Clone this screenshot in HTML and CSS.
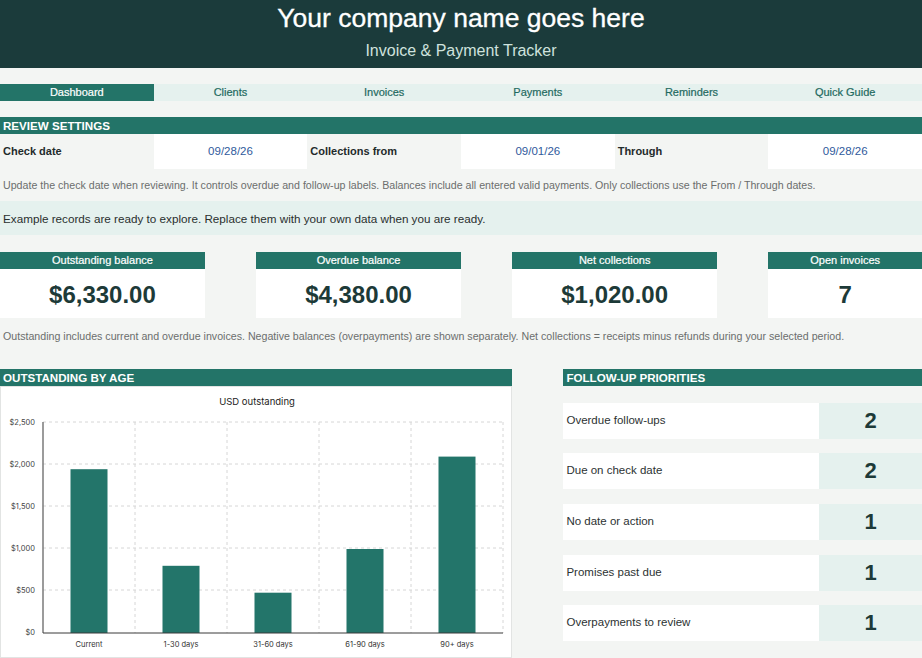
FILE: index.html
```html
<!DOCTYPE html>
<html lang="en">
<head>
<meta charset="utf-8">
<title>Invoice &amp; Payment Tracker</title>
<link rel="stylesheet" href="styles.css">
</head>
<body>
<header class="masthead">
  <h1 class="company">Your company name goes here</h1>
  <p class="subtitle">Invoice &amp; Payment Tracker</p>
</header>

<nav class="tabs">
  <a class="tab is-active">Dashboard</a>
  <a class="tab">Clients</a>
  <a class="tab">Invoices</a>
  <a class="tab">Payments</a>
  <a class="tab">Reminders</a>
  <a class="tab">Quick Guide</a>
</nav>

<section class="review">
  <h2 class="bar">REVIEW SETTINGS</h2>
  <div class="settings">
    <div class="set-label">Check date</div>
    <div class="set-value">09/28/26</div>
    <div class="set-label">Collections from</div>
    <div class="set-value">09/01/26</div>
    <div class="set-label">Through</div>
    <div class="set-value">09/28/26</div>
  </div>
  <p class="note">Update the check date when reviewing. It controls overdue and follow-up labels. Balances include all entered valid payments. Only collections use the From / Through dates.</p>
  <p class="banner">Example records are ready to explore. Replace them with your own data when you are ready.</p>
</section>

<section class="kpis">
  <div class="kpi kpi-1">
    <div class="kpi-head">Outstanding balance</div>
    <div class="kpi-value">$6,330.00</div>
  </div>
  <div class="kpi kpi-2">
    <div class="kpi-head">Overdue balance</div>
    <div class="kpi-value">$4,380.00</div>
  </div>
  <div class="kpi kpi-3">
    <div class="kpi-head">Net collections</div>
    <div class="kpi-value">$1,020.00</div>
  </div>
  <div class="kpi kpi-4">
    <div class="kpi-head">Open invoices</div>
    <div class="kpi-value">7</div>
  </div>
</section>
<p class="note note-kpi">Outstanding includes current and overdue invoices. Negative balances (overpayments) are shown separately. Net collections = receipts minus refunds during your selected period.</p>

<section class="lower">
  <div class="age">
    <h2 class="bar">OUTSTANDING BY AGE</h2>
    <div class="chart-box">
      <svg class="chart" width="510" height="270" viewBox="0 0 510 270">
        <text class="chart-title" x="256" y="18" text-anchor="middle">USD outstanding</text>
        <!-- dashed grid -->
        <g class="grid">
          <line x1="42" y1="35" x2="502" y2="35"/>
          <line x1="42" y1="77" x2="502" y2="77"/>
          <line x1="42" y1="119" x2="502" y2="119"/>
          <line x1="42" y1="161" x2="502" y2="161"/>
          <line x1="42" y1="203" x2="502" y2="203"/>
          <line x1="134" y1="35" x2="134" y2="246"/>
          <line x1="226" y1="35" x2="226" y2="246"/>
          <line x1="318" y1="35" x2="318" y2="246"/>
          <line x1="410" y1="35" x2="410" y2="246"/>
          <line x1="502" y1="35" x2="502" y2="246"/>
        </g>
        <g class="ylabels" text-anchor="end">
          <text x="34" y="38">$2,500</text>
          <text x="34" y="80">$2,000</text>
          <text x="34" y="122">$1,500</text>
          <text x="34" y="164">$1,000</text>
          <text x="34" y="206">$500</text>
          <text x="34" y="248">$0</text>
        </g>
        <g class="bars">
          <rect x="69.5" y="82.2" width="37" height="163.8"/>
          <rect x="161.5" y="178.8" width="37" height="67.2"/>
          <rect x="253.5" y="205.7" width="37" height="40.3"/>
          <rect x="345.5" y="162" width="37" height="84"/>
          <rect x="437.5" y="69.6" width="37" height="176.4"/>
        </g>
        <line class="axis-y" x1="42" y1="35" x2="42" y2="246"/>
        <line class="axis-x" x1="42" y1="246" x2="502" y2="246"/>
        <g class="xlabels" text-anchor="middle">
          <text x="88" y="260">Current</text>
          <text x="180" y="260">1-30 days</text>
          <text x="272" y="260">31-60 days</text>
          <text x="364" y="260">61-90 days</text>
          <text x="456" y="260">90+ days</text>
        </g>
      </svg>
    </div>
  </div>

  <div class="priorities">
    <h2 class="bar">FOLLOW-UP PRIORITIES</h2>
    <ul class="prio-list">
      <li class="prio"><span class="prio-label">Overdue follow-ups</span><span class="prio-count">2</span></li>
      <li class="prio"><span class="prio-label">Due on check date</span><span class="prio-count">2</span></li>
      <li class="prio"><span class="prio-label">No date or action</span><span class="prio-count">1</span></li>
      <li class="prio"><span class="prio-label">Promises past due</span><span class="prio-count">1</span></li>
      <li class="prio"><span class="prio-label">Overpayments to review</span><span class="prio-count">1</span></li>
    </ul>
  </div>
</section>
</body>
</html>
```

FILE: styles.css
```css
:root {
  --ink: #1d3a38;
  --deep: #1b3b3b;
  --teal: #237468;
  --tint: #e5f1ee;
  --page: #f3f5f3;
  --muted: #6b6e6d;
  --date: #2f5a9c;
}

* { box-sizing: border-box; }

body {
  margin: 0;
  background: var(--page);
  font-family: "Liberation Sans", Arial, sans-serif;
  color: #2b3333;
  width: 922px;
  overflow: hidden;
}

/* Top banner */
.masthead {
  background: var(--deep);
  height: 68px;
  padding-top: 3px;
  text-align: center;
}
.company {
  margin: 0;
  font-size: 26.5px;
  line-height: 30px;
  font-weight: normal;
  color: #ffffff;
  -webkit-text-stroke: 0.3px #ffffff;
}
.subtitle {
  margin: 8px 0 0;
  font-size: 16px;
  line-height: 20px;
  color: #cfe2de;
}

/* Sheet navigation */
.tabs {
  margin-top: 16px;
  display: grid;
  grid-template-columns: repeat(6, 1fr);
  height: 17px;
}
.tab {
  background: var(--tint);
  color: #1f6a5f;
  font-size: 11px;
  line-height: 17px;
  text-align: center;
  -webkit-text-stroke: 0.2px currentColor;
}
.tab.is-active {
  background: var(--teal);
  color: #ffffff;
}

/* Section title bars */
.bar {
  margin: 0;
  height: 17px;
  background: var(--teal);
  color: #ffffff;
  font-size: 11.6px;
  line-height: 17px;
  font-weight: bold;
  padding-left: 3px;
}

.review { margin-top: 16px; }

.settings {
  display: grid;
  grid-template-columns: repeat(6, 1fr);
  height: 34px;
}
.set-label {
  font-size: 11px;
  font-weight: bold;
  color: #1f2b2b;
  padding-left: 3px;
  line-height: 35px;
}
.set-value {
  background: #ffffff;
  color: var(--date);
  font-size: 11.5px;
  text-align: center;
  line-height: 35px;
}

.note {
  margin: 0;
  height: 33px;
  padding-left: 3px;
  font-size: 10.65px;
  line-height: 34px;
  color: var(--muted);
  white-space: nowrap;
}
.banner {
  margin: 0;
  height: 34px;
  background: var(--tint);
  padding-left: 3px;
  font-size: 11.7px;
  line-height: 35px;
  color: #2a2f2f;
}

/* Headline figures */
.kpis {
  margin-top: 17px;
  display: grid;
  grid-template-columns: repeat(18, 1fr);
}
.kpi-1 { grid-column: 1 / 5; }
.kpi-2 { grid-column: 6 / 10; }
.kpi-3 { grid-column: 11 / 15; }
.kpi-4 { grid-column: 16 / 19; }
.kpi-head {
  height: 17px;
  background: var(--teal);
  color: #ffffff;
  font-size: 11px;
  line-height: 17px;
  text-align: center;
  -webkit-text-stroke: 0.2px #ffffff;
}
.kpi-value {
  height: 49px;
  background: #ffffff;
  color: var(--ink);
  font-size: 24px;
  font-weight: bold;
  display: flex;
  align-items: center;
  justify-content: center;
  padding-top: 2px;
}
.note-kpi { height: 34px; line-height: 36px; }

/* Chart and follow-up lists */
.lower {
  margin-top: 17px;
  display: grid;
  grid-template-columns: repeat(18, 1fr);
}
.age { grid-column: 1 / 11; }
.priorities { grid-column: 12 / 19; }

.chart-box {
  height: 272px;
  background: #ffffff;
  border: 1px solid #e2e4e3;
}
.chart { display: block; font-family: Inter, "DejaVu Sans", sans-serif; }
.chart-title { font-size: 9.5px; fill: #222; }
.grid line { stroke: #d6d6d6; stroke-width: 1; stroke-dasharray: 3 3; }
.ylabels text { font-size: 7.5px; fill: #444; }
.xlabels text { font-size: 7.5px; fill: #333; }
.bars rect { fill: #23756a; }
.axis-y { stroke: #7a7a7a; stroke-width: 1.5; }
.axis-x { stroke: #3a3a3a; stroke-width: 1; }

.prio-list {
  list-style: none;
  margin: 0;
  padding: 16.5px 0 0;
  display: flex;
  flex-direction: column;
  gap: 16.7px;
}
.prio {
  display: grid;
  grid-template-columns: 256px 1fr;
  height: 34px;
}
.prio-label {
  background: #ffffff;
  padding-left: 3px;
  font-size: 11.5px;
  line-height: 35px;
  color: #2c3232;
}
.prio-count {
  background: var(--tint);
  color: var(--ink);
  font-size: 22px;
  font-weight: bold;
  text-align: center;
  line-height: 36px;
}
```
